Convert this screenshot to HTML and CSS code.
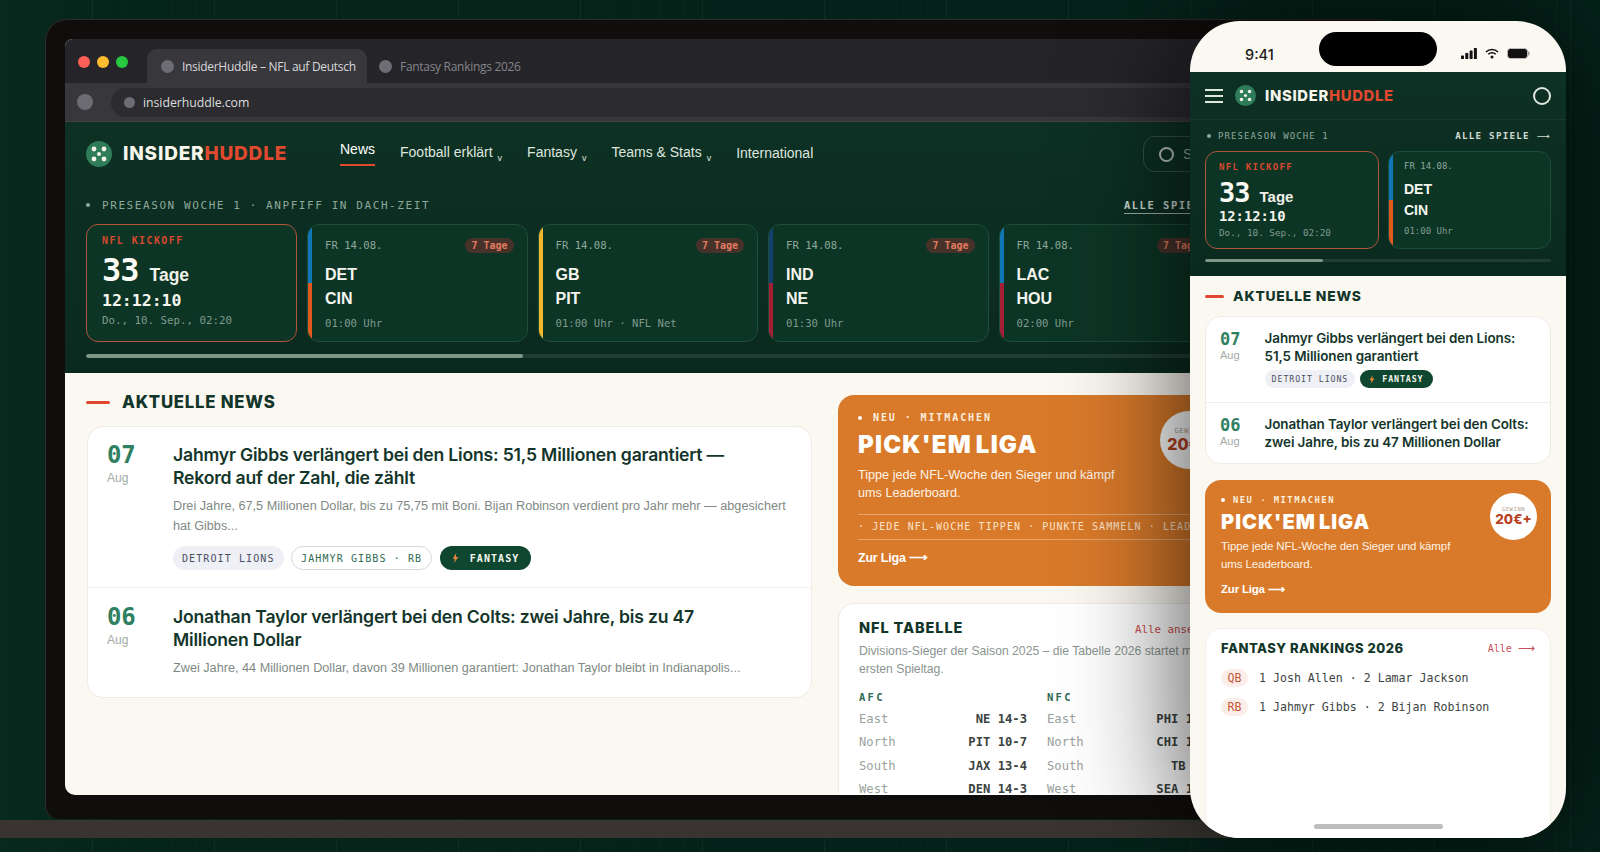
FILE: index.html
```html
<!DOCTYPE html>
<html lang="de">
<head>
<meta charset="utf-8">
<title>InsiderHuddle</title>
<link rel="stylesheet" href="styles.css">
</head>
<body>
<div class="base"></div>
<section class="laptop">
  <div class="screen">
    <div class="tabs">
      <div class="lights"><i class="red"></i><i class="yellow"></i><i class="green"></i></div>
      <div class="tab active"><i></i>InsiderHuddle – NFL auf Deutsch</div>
      <div class="tab"><i></i>Fantasy Rankings 2026</div>
    </div>
    <div class="addr">
      <i class="back"></i>
      <div class="url"><i></i>insiderhuddle.com</div>
    </div>
    <header class="hero">
      <nav class="nav">
        <div class="brand">
          <svg class="mark" viewBox="0 0 26 26"><circle cx="13" cy="13" r="13" fill="#2f7d58"/><g fill="#f5f3ea"><circle cx="8" cy="8" r="2.4"/><circle cx="18" cy="8" r="2.4"/><circle cx="13" cy="13" r="2"/><circle cx="8" cy="18" r="2.4"/><circle cx="18" cy="18" r="2.4"/></g></svg>
          <span class="word">INSIDER<b>HUDDLE</b></span>
        </div>
        <ul class="menu">
          <li class="on">News</li>
          <li>Football erklärt<small>v</small></li>
          <li>Fantasy<small>v</small></li>
          <li>Teams &amp; Stats<small>v</small></li>
          <li>International</li>
        </ul>
        <div class="search"><i></i>Suchen</div>
      </nav>
      <div class="tick-head">
        <span class="tick-label"><i></i>PRESEASON WOCHE 1 · ANPFIFF IN DACH-ZEIT</span>
        <span class="tick-all">ALLE SPIELE</span>
      </div>
      <div class="games">
        <article class="kick">
          <div class="kick-tag">NFL KICKOFF</div>
          <div class="kick-big"><strong>33</strong><span>Tage</span></div>
          <div class="kick-clock">12:12:10</div>
          <div class="kick-date">Do., 10. Sep., 02:20</div>
        </article>
        <article class="game">
          <div class="stripe"><i class="c-det"></i><i class="c-cin"></i></div>
          <div class="game-in">
            <div class="game-top"><span>FR 14.08.</span><em>7 Tage</em></div>
            <div class="team first">DET</div><div class="team">CIN</div>
            <div class="game-time">01:00 Uhr</div>
          </div>
        </article>
        <article class="game">
          <div class="stripe"><i class="c-gb"></i><i class="c-gb"></i></div>
          <div class="game-in">
            <div class="game-top"><span>FR 14.08.</span><em>7 Tage</em></div>
            <div class="team first">GB</div><div class="team">PIT</div>
            <div class="game-time">01:00 Uhr · NFL Net</div>
          </div>
        </article>
        <article class="game">
          <div class="stripe"><i class="c-ind"></i><i class="c-ne"></i></div>
          <div class="game-in">
            <div class="game-top"><span>FR 14.08.</span><em>7 Tage</em></div>
            <div class="team first">IND</div><div class="team">NE</div>
            <div class="game-time">01:30 Uhr</div>
          </div>
        </article>
        <article class="game">
          <div class="stripe"><i class="c-det"></i><i class="c-ne"></i></div>
          <div class="game-in">
            <div class="game-top"><span>FR 14.08.</span><em>7 Tage</em></div>
            <div class="team first">LAC</div><div class="team">HOU</div>
            <div class="game-time">02:00 Uhr</div>
          </div>
        </article>
      </div>
      <div class="scroll"><i></i></div>
    </header>
    <main class="content">
      <div class="news-col">
        <h2 class="sec"><i></i>AKTUELLE NEWS</h2>
        <div class="news">
          <article class="item">
            <div class="date"><b>07</b><span>Aug</span></div>
            <div class="body">
              <h3>Jahmyr Gibbs verlängert bei den Lions: 51,5 Millionen garantiert — Rekord auf der Zahl, die zählt</h3>
              <p>Drei Jahre, 67,5 Millionen Dollar, bis zu 75,75 mit Boni. Bijan Robinson verdient pro Jahr mehr — abgesichert hat Gibbs...</p>
              <div class="tags">
                <span class="tag grey">DETROIT LIONS</span>
                <span class="tag line">JAHMYR GIBBS · RB</span>
                <span class="tag dark"><svg viewBox="0 0 10 14"><path d="M6 0 1 8h3l-1 6 6-8.500H5.500z" fill="#e8873a"/></svg>FANTASY</span>
              </div>
            </div>
          </article>
          <article class="item">
            <div class="date"><b>06</b><span>Aug</span></div>
            <div class="body">
              <h3>Jonathan Taylor verlängert bei den Colts: zwei Jahre, bis zu 47 Millionen Dollar</h3>
              <p>Zwei Jahre, 44 Millionen Dollar, davon 39 Millionen garantiert: Jonathan Taylor bleibt in Indianapolis...</p>
            </div>
          </article>
        </div>
      </div>
      <aside class="side">
        <section class="pick">
          <div class="pick-tag"><i></i>NEU · MITMACHEN</div>
          <h2>PICK'EM LIGA</h2>
          <p>Tippe jede NFL-Woche den Sieger und kämpf<br>ums Leaderboard.</p>
          <div class="pick-strip">· JEDE NFL-WOCHE TIPPEN · PUNKTE SAMMELN · LEADERBOARD</div>
          <div class="pick-link">Zur Liga ⟶</div>
          <div class="prize"><small>GEWINN</small><b>20€+</b></div>
        </section>
        <section class="table">
          <div class="table-head"><h2>NFL TABELLE</h2><span>Alle ansehen</span></div>
          <p>Divisions-Sieger der Saison 2025 – die Tabelle 2026 startet mit dem ersten Spieltag.</p>
          <div class="confs">
            <div class="conf">
              <h4>AFC</h4>
              <div class="row"><span>East</span><b>NE 14-3</b></div>
              <div class="row"><span>North</span><b>PIT 10-7</b></div>
              <div class="row"><span>South</span><b>JAX 13-4</b></div>
              <div class="row"><span>West</span><b>DEN 14-3</b></div>
            </div>
            <div class="conf">
              <h4>NFC</h4>
              <div class="row"><span>East</span><b>PHI 11-6</b></div>
              <div class="row"><span>North</span><b>CHI 11-6</b></div>
              <div class="row"><span>South</span><b>TB 8-9</b></div>
              <div class="row"><span>West</span><b>SEA 14-3</b></div>
            </div>
          </div>
        </section>
      </aside>
    </main>
  </div>
</section>

<section class="phone">
  <div class="status">
    <span class="time">9:41</span>
    <div class="island"></div>
    <div class="sicons">
      <svg class="sig" viewBox="0 0 16 11"><rect x="0" y="7.500" width="3" height="3.500" rx=".6"/><rect x="4.300" y="5" width="3" height="6" rx=".6"/><rect x="8.600" y="2.500" width="3" height="8.500" rx=".6"/><rect x="12.900" y="0" width="3" height="11" rx=".6"/></svg>
      <svg class="wifi" viewBox="0 0 14 11"><path d="M1 4a8.500 8.500 0 0 1 12 0M3.200 6.300a5.400 5.400 0 0 1 7.600 0" fill="none" stroke="#111" stroke-width="1.500"/><circle cx="7" cy="9" r="1.500" fill="#111"/></svg>
      <svg class="batt" viewBox="0 0 23 11"><rect x=".5" y=".5" width="20" height="10" rx="3" fill="#111" stroke="#bbb"/><rect x="21" y="3.500" width="1.500" height="4" rx=".7" fill="#999"/></svg>
    </div>
  </div>
  <div class="hero">
    <nav class="pnav">
      <div class="burger"><i></i><i></i><i></i></div>
      <svg class="mark" viewBox="0 0 26 26"><circle cx="13" cy="13" r="13" fill="#2f7d58"/><g fill="#f5f3ea"><circle cx="8" cy="8" r="2.200"/><circle cx="18" cy="8" r="2.200"/><circle cx="13" cy="13" r="2"/><circle cx="8" cy="18" r="2.200"/><circle cx="18" cy="18" r="2.200"/></g></svg>
      <span class="word">INSIDER<b>HUDDLE</b></span>
      <i class="ring"></i>
    </nav>
    <div class="tick-head">
      <span class="tick-label"><i></i>PRESEASON WOCHE 1</span>
      <span class="tick-all">ALLE SPIELE <span class="arr">⟶</span></span>
    </div>
    <div class="games">
      <article class="kick">
        <div class="kick-tag">NFL KICKOFF</div>
        <div class="kick-big"><strong>33</strong><span>Tage</span></div>
        <div class="kick-clock">12:12:10</div>
        <div class="kick-date">Do., 10. Sep., 02:20</div>
      </article>
      <article class="game">
        <div class="stripe"><i class="c-det"></i><i class="c-cin"></i></div>
        <div class="game-in">
          <div class="game-top"><span>FR 14.08.</span></div>
          <div class="team first">DET</div><div class="team">CIN</div>
          <div class="game-time">01:00 Uhr</div>
        </div>
      </article>
    </div>
    <div class="scroll"><i></i></div>
  </div>
  <div class="pbody">
    <h2 class="sec"><i></i>AKTUELLE NEWS</h2>
    <div class="news">
      <article class="item">
        <div class="date"><b>07</b><span>Aug</span></div>
        <div class="body">
          <h3>Jahmyr Gibbs verlängert bei den Lions: 51,5 Millionen garantiert</h3>
          <div class="tags">
            <span class="tag grey">DETROIT LIONS</span>
            <span class="tag dark"><svg viewBox="0 0 10 14"><path d="M6 0 1 8h3l-1 6 6-8.500H5.500z" fill="#e8873a"/></svg>FANTASY</span>
          </div>
        </div>
      </article>
      <article class="item">
        <div class="date"><b>06</b><span>Aug</span></div>
        <div class="body">
          <h3>Jonathan Taylor verlängert bei den Colts: zwei Jahre, bis zu 47 Millionen Dollar</h3>
        </div>
      </article>
    </div>
    <section class="pick">
      <div class="pick-tag"><i></i>NEU · MITMACHEN</div>
      <h2>PICK'EM LIGA</h2>
      <p>Tippe jede NFL-Woche den Sieger und kämpf<br>ums Leaderboard.</p>
      <div class="pick-link">Zur Liga ⟶</div>
      <div class="prize"><small>GEWINN</small><b>20€+</b></div>
    </section>
    <section class="rank">
      <div class="rank-head"><h2>FANTASY RANKINGS 2026</h2><span>Alle <span class="arr">⟶</span></span></div>
      <div class="rank-row"><em>QB</em><span>1 Josh Allen · 2 Lamar Jackson</span></div>
      <div class="rank-row"><em>RB</em><span>1 Jahmyr Gibbs · 2 Bijan Robinson</span></div>
    </section>
  </div>
  <div class="home"></div>
</section>
</body>
</html>
```

FILE: styles.css
```css
* { box-sizing: border-box; margin: 0; padding: 0; }
html, body { width: 1600px; height: 852px; overflow: hidden; }
body {
  position: relative;
  font-family: "Liberation Sans", Arial, sans-serif;
  background:
    repeating-linear-gradient(90deg, rgba(255,255,255,.045) 0 1px, transparent 1px 122px) -30px 0,
    repeating-linear-gradient(90deg, rgba(255,255,255,.012) 0 1px, transparent 1px 24.400px),
    linear-gradient(90deg, #08291e 0, #06251a 8%, #05221a 50%, #04231a 100%);
}
ul { list-style: none; }
i, em { font-style: normal; }
i { display: block; }
.tick-all .arr { font: 400 1em/1 "DejaVu Sans", sans-serif; }
.rank-head .arr { font: 400 12px/1 "DejaVu Sans", sans-serif; }

.base { position: absolute; left: 0; top: 820px; width: 1400px; height: 18px; background: #393431; }

.laptop {
  position: absolute; left: 45px; top: 19px; width: 1355px; height: 800px;
  padding: 19px 20px 24px 19px;
  background: #100e0c;
  border: 1px solid #2f2b28; border-bottom: 0;
  border-radius: 22px 22px 14px 14px;
}
.screen {
  width: 100%; height: 756px;
  background: #fbf8f1;
  border-radius: 8px 8px 10px 10px;
  overflow: hidden;
}

/* browser chrome */
.tabs { height: 44px; background: #242429; display: flex; align-items: flex-end; padding-left: 13px; }
.lights { display: flex; gap: 7px; align-self: flex-start; margin-top: 17px; width: 69px; flex: none; }
.lights i { width: 12px; height: 12px; border-radius: 50%; }
.lights .red { background: #ff5f57; }
.lights .yellow { background: #febc2e; }
.lights .green { background: #28c840; }
.tab {
  height: 34px; width: 206px; padding-left: 12px; display: flex; align-items: center; gap: 8px; flex: none;
  font: 12px "Open Sans", sans-serif; color: #85858b; letter-spacing: -.3px; white-space: nowrap;
}
.tab i { width: 13px; height: 13px; border-radius: 50%; background: #6d6d73; flex: none; }
.tab.active { background: #37373c; color: #d9d9da; border-radius: 10px 10px 0 0; width: 220px; padding-left: 14px; }
.addr { height: 39px; background: #37373c; border-bottom: 1px solid #443f44; display: flex; align-items: center; padding-left: 12px; }
.addr .back { width: 16px; height: 16px; border-radius: 50%; background: #6c6c72; flex: none; }
.url {
  margin-left: 18px; flex: 1; height: 29px; border-radius: 15px 0 0 15px; background: #2b2b30;
  display: flex; align-items: center; gap: 8px; padding-left: 13px;
  font: 12.300px "Open Sans", sans-serif; color: #dcdcdc; letter-spacing: -.05px;
}
.url i { width: 11px; height: 11px; border-radius: 50%; background: #6c6c72; }

/* green hero, shared by both mockups */
.hero { background: linear-gradient(180deg, #0d3124, #0b2a1f); color: #fff; }
.screen .hero { height: 251px; padding: 0 21px; }
.nav { height: 64px; display: flex; align-items: center; }
.brand { display: flex; align-items: center; gap: 11px; width: 254px; flex: none; }
.mark { width: 26px; height: 26px; flex: none; display: block; }
.word { font: 800 19px Inter, sans-serif; letter-spacing: .8px; color: #f7f5ec; white-space: nowrap; position: relative; top: -1px; }
.word b { color: #e0492f; font-weight: 800; }
.menu { display: flex; align-items: center; gap: 25px; font-size: 14px; color: #dfe5df; white-space: nowrap; margin-top: -2px; }
.menu li { position: relative; line-height: 20px; }
.menu small { font-size: 9px; margin-left: 5px; position: relative; top: 4px; }
.menu .on { color: #fff; padding-bottom: 8px; }
.menu .on::after { content: ""; position: absolute; left: 0; right: 0; top: 25px; height: 2px; background: #e0492f; }
.search {
  margin-left: auto; display: flex; align-items: center; gap: 9px; width: 215px; height: 36px;
  border: 1px solid rgba(255,255,255,.16); border-radius: 12px; padding-left: 15px;
  color: #9db0a5; font-size: 14px;
}
.search i { width: 15px; height: 15px; border: 2px solid #b9c5bd; border-radius: 50%; }

.tick-head { display: flex; justify-content: space-between; align-items: center; }
.screen .tick-head { height: 38px; }
.tick-label {
  display: flex; align-items: center; gap: 12px;
  font: 11px "DejaVu Sans Mono", monospace; letter-spacing: 1.580px; color: #8fa89b; white-space: nowrap;
}
.tick-label i { width: 4px; height: 4px; border-radius: 50%; background: #8fa89b; }
.tick-all {
  font: 700 10.500px "DejaVu Sans Mono", monospace; letter-spacing: 1.500px; color: #cfd9d2; white-space: nowrap;
}
.screen .tick-all { border-bottom: 1px solid #9db0a5; padding-bottom: 2px; margin-right: 148px; margin-top: 2px; }

.games { display: flex; gap: 10px; overflow: hidden; }
.screen .games { height: 118px; }
.kick, .game { border-radius: 12px; background: #0d3526; flex: none; height: 100%; }
.kick { width: 211px; border: 1px solid #b2553c; padding: 9px 15px 0; }
.kick-tag { font: 700 10px/14px "DejaVu Sans Mono", monospace; letter-spacing: 1.400px; color: #d9482f; }
.kick-big { display: flex; align-items: baseline; gap: 11px; margin-top: 4px; height: 36px; line-height: 36px; }
.kick-big strong { font: 600 32px/36px "DejaVu Sans Mono", monospace; color: #fbfbf5; letter-spacing: -1px; }
.kick-big span { font-size: 17.500px; font-weight: 700; color: #f0f0e8; }
.kick-clock { font: 700 16.500px/20px "DejaVu Sans Mono", monospace; color: #f5f5ee; margin-top: 3px; }
.kick-date { font: 10.800px/14px "DejaVu Sans Mono", monospace; color: #7f9a8d; margin-top: 3px; }

.game { width: 220.500px; display: flex; border: 1px solid #1d4d3b; overflow: hidden; }
.stripe { width: 5px; flex: none; display: flex; flex-direction: column; margin: -1px 0 -1px -1px; }
.stripe i { flex: 1; }
.c-det { background: #0f77b5; }
.c-cin { background: #e2591d; }
.c-gb { background: #f0b72a; }
.c-ind { background: #12406f; }
.c-ne { background: #a51f34; }
.game-in { flex: 1; padding: 12px 13px 0 13px; min-width: 0; }
.game-top { height: 16px; display: flex; justify-content: space-between; align-items: center; }
.game-top span { font: 10.600px "DejaVu Sans Mono", monospace; color: #8fa89b; }
.game-top em {
  height: 15px; line-height: 15px; border-radius: 8px; background: #47322a; padding: 0 6px;
  font: 700 10px/15px "DejaVu Sans Mono", monospace; color: #e27b5f;
}
.team { font-size: 16px; font-weight: 700; line-height: 24px; color: #f5f5ef; }
.team.first { margin-top: 10px; }
.game-time { font: 10.600px/16px "DejaVu Sans Mono", monospace; color: #7f9a8d; margin-top: 4px; white-space: nowrap; }

.scroll { height: 4px; border-radius: 2px; background: rgba(255,255,255,.09); margin-top: 12px; overflow: hidden; }
.scroll i { height: 100%; width: 437px; background: #7c9688; border-radius: 2px; }

/* desktop content */
.content { display: grid; grid-template-columns: 725px 400px; gap: 26px; padding: 0 0 0 22px; }
.sec { display: flex; align-items: center; gap: 12px; font: 800 16.800px Inter, sans-serif; color: #12352a; letter-spacing: .75px; white-space: nowrap; }
.sec i { width: 24px; height: 3px; background: #e0492f; border-radius: 2px; flex: none; }
.news-col .sec { height: 20px; margin-top: 19px; margin-bottom: 14px; margin-left: -1px; }
.news { background: #fff; border: 1px solid #efece5; border-radius: 16px; }
.item { display: flex; padding: 16px 19px 17px; }
.item + .item { border-top: 1px solid #f1efe9; padding-top: 17px; padding-bottom: 18px; }
.date { width: 66px; flex: none; }
.date b { display: block; font: 700 24px/24px "DejaVu Sans Mono", monospace; color: #2f8060; letter-spacing: -.1px; }
.date span { display: block; font-size: 12px; line-height: 14px; color: #a2aaa6; margin-top: 4px; }
.body { min-width: 0; flex: 1; }
.item h3 { font: 600 17.600px/23px Inter, sans-serif; color: #14352a; letter-spacing: -.2px; max-width: 580px; }
.item p { font-size: 12.680px; line-height: 19.500px; color: #7f8a85; margin-top: 8px; }
.tags { display: flex; gap: 7.500px; margin-top: 10px; }
.tag {
  height: 24px; border-radius: 12px; padding: 0 9px; display: flex; align-items: center; white-space: nowrap;
  font: 10px "DejaVu Sans Mono", monospace; letter-spacing: 1.100px;
}
.tag.grey { background: #eef0f5; color: #4a4f63; }
.tag.line { border: 1px solid #d3dbd7; color: #2f6b52; }
.tag.dark { background: #0f4630; color: #f6f6ef; font-weight: 700; gap: 11px; padding: 0 12px; }
.tag svg { width: 7px; height: 10px; flex: none; }

.side { margin-top: 22px; display: flex; flex-direction: column; gap: 17px; }
.pick { position: relative; background: #d97a2a; color: #fff; border-radius: 16px; }
.side .pick { height: 191px; padding: 16px 0 0 20px; overflow: hidden; }
.pick-tag { display: flex; align-items: center; gap: 11px; font: 700 10px/14px "DejaVu Sans Mono", monospace; letter-spacing: 1.900px; color: #fdeedd; }
.pick-tag i { width: 4px; height: 4px; border-radius: 50%; background: #fff; }
.pick h2 { font: 900 24px/30px Inter, sans-serif; margin-top: 5px; letter-spacing: 1.200px; word-spacing: -2px; white-space: nowrap; }
.pick p { font-size: 12.650px; line-height: 18px; margin-top: 6px; color: #fdf3e7; }
.pick-strip {
  height: 26px; margin-top: 12px; border-top: 1px solid rgba(255,255,255,.32); border-bottom: 1px solid rgba(255,255,255,.32);
  font: 10px/23px "DejaVu Sans Mono", monospace; letter-spacing: 1.070px; color: #fbe3cb; white-space: nowrap; overflow: hidden;
}
.pick-link { font-size: 12.500px; font-weight: 700; line-height: 18px; margin-top: 9px; letter-spacing: -.2px; }
.prize {
  position: absolute; right: 20px; top: 16px; width: 58px; height: 58px; border-radius: 50%; background: #fff;
  display: flex; flex-direction: column; align-items: center; justify-content: center; color: #b8421f;
}
.prize small { font: 7px "DejaVu Sans Mono", monospace; letter-spacing: .6px; color: #b59d8d; }
.prize b { font: 800 16px/18px Inter, sans-serif; }

.table { background: #fff; border: 1px solid #efece5; border-radius: 16px; padding: 14px 19px 0 20px; height: 260px; }
.table-head { display: flex; justify-content: space-between; align-items: center; height: 18px; }
.table-head h2 { font: 800 14.500px Inter, sans-serif; color: #12352a; letter-spacing: .9px; }
.table-head span { font: 10.800px "DejaVu Sans Mono", monospace; color: #cc4b4b; margin-right: 5px; position: relative; top: 2px; }
.table > p { font-size: 12.200px; line-height: 17.500px; color: #8a9590; margin-top: 7px; margin-right: -20px; }
.confs { display: grid; grid-template-columns: 168px 168px; gap: 20px; margin-top: 11px; }
.conf h4 { font: 700 10.500px/16px "DejaVu Sans Mono", monospace; letter-spacing: 2.300px; color: #2f6b52; margin-bottom: 3px; }
.row { display: flex; justify-content: space-between; font: 12.200px/23.300px "DejaVu Sans Mono", monospace; white-space: nowrap; }
.row span { color: #9aa39e; }
.row b { font-weight: 700; color: #3a4340; }

/* phone */
.phone {
  position: absolute; left: 1190px; top: 21px; width: 376px; height: 817px;
  border-radius: 50px; background: #fbf8f1; overflow: hidden;
  box-shadow: 0 0 120px rgba(0,0,0,.75);
}
.status { height: 51px; display: flex; align-items: center; padding-top: 16px; position: relative; }
.time { font: 500 14.500px Inter, sans-serif; color: #1a1a1a; margin-left: 55px; }
.island { position: absolute; left: 129px; top: 11px; width: 118px; height: 34px; border-radius: 17px; background: #000; }
.sicons { position: absolute; left: 271px; top: 27px; display: flex; align-items: center; gap: 8px; }
.sig { width: 16px; height: 11px; fill: #111; }
.wifi { width: 14px; height: 11px; }
.batt { width: 23px; height: 11px; }
.phone .hero { height: 204px; padding: 0 15px; }
.pnav { height: 48px; margin: 0 -15px; padding: 0 15px; display: flex; align-items: center; border-bottom: 1px solid rgba(255,255,255,.05); }
.burger { width: 18px; display: flex; flex-direction: column; gap: 4px; margin-right: 12px; }
.burger i { height: 2px; background: #dfe7e0; }
.pnav .mark { width: 21px; height: 21px; margin-right: 9px; }
.pnav .word { font-size: 14.800px; letter-spacing: .7px; top: 0; }
.ring { width: 18px; height: 18px; border: 2px solid #dfe7e0; border-radius: 50%; margin-left: auto; }
.phone .tick-head { height: 31px; }
.phone .tick-label { font-size: 9px; letter-spacing: 1.100px; gap: 7px; padding-left: 2px; }
.phone .tick-all { font-size: 9.200px; letter-spacing: 1.250px; }
.phone .games { height: 98px; gap: 9px; }
.phone .kick { width: 174px; padding: 9px 13px 0; }
.phone .kick-tag { font-size: 9px; line-height: 13px; letter-spacing: 1.300px; }
.phone .kick-big { height: 30px; margin-top: 4px; gap: 10px; line-height: 30px; }
.phone .kick-big strong { font-size: 27px; line-height: 30px; }
.phone .kick-big span { font-size: 15px; }
.phone .kick-clock { font-size: 13.800px; line-height: 17px; margin-top: 0; }
.phone .kick-date { font-size: 9.300px; line-height: 12px; margin-top: 2px; }
.phone .game { width: 163px; }
.phone .game-in { padding: 6px 12px 0 11px; }
.phone .game-top span { font-size: 9px; }
.phone .team { font-size: 14px; line-height: 21px; }
.phone .team.first { margin-top: 5px; }
.phone .game-time { font-size: 9px; line-height: 12px; margin-top: 4px; }
.phone .scroll { margin-top: 10px; height: 3px; }
.phone .scroll i { width: 118px; }
.pbody { padding: 10px 15px 0; }
.pbody .sec { font-size: 13.800px; height: 20px; gap: 9px; margin-bottom: 10px; letter-spacing: .8px; }
.pbody .sec i { width: 19px; }
.pbody .item { padding: 12px 14px 14px; }
.pbody .item + .item { padding-top: 12px; padding-bottom: 12px; }
.pbody .date { width: 44.600px; }
.pbody .date b { font-size: 17px; line-height: 20px; }
.pbody .date span { font-size: 11px; line-height: 12px; margin-top: 0; }
.pbody .item h3 { font-size: 13.450px; line-height: 18px; letter-spacing: -.1px; max-width: none; }
.pbody .tags { margin-top: 5px; gap: 5px; }
.pbody .tag { height: 18px; font-size: 8.300px; letter-spacing: .9px; padding: 0 7px; }
.pbody .tag.dark { gap: 7px; padding: 0 9px; }
.pbody .tag svg { width: 6px; height: 9px; }
.pbody .pick { margin-top: 16px; height: 133px; padding: 13px 0 0 16px; }
.pbody .pick-tag { font-size: 8.800px; letter-spacing: 1.500px; gap: 8px; }
.pbody .pick h2 { font-size: 20px; line-height: 26px; margin-top: 2px; letter-spacing: 1px; }
.pbody .pick p { font-size: 11.500px; line-height: 17.500px; margin-top: 3px; letter-spacing: -.1px; }
.pbody .pick-link { font-size: 11.500px; line-height: 16px; margin-top: 8px; }
.pbody .prize { right: 14px; top: 13px; width: 47px; height: 47px; }
.pbody .prize small { font-size: 5.500px; }
.pbody .prize b { font-size: 13.500px; line-height: 15px; }
.rank { margin-top: 15px; height: 300px; background: #fff; border: 1px solid #f3f0ea; border-radius: 16px; padding: 10px 15px 0; }
.rank-head { display: flex; justify-content: space-between; align-items: center; height: 18px; margin-bottom: 12px; }
.rank-head h2 { font: 800 13px Inter, sans-serif; color: #12352a; letter-spacing: .5px; }
.rank-head > span { font: 10px "DejaVu Sans Mono", monospace; color: #c9505a; }
.rank-row { display: flex; align-items: center; gap: 11px; height: 18px; margin-bottom: 11px; font: 11.600px "DejaVu Sans Mono", monospace; color: #3c4441; white-space: nowrap; }
.rank-row em { width: 27px; height: 18px; border-radius: 9px; background: #fbeee9; color: #c4583a; text-align: center; line-height: 18px; }
.home { position: absolute; left: 124px; bottom: 9px; width: 129px; height: 5px; border-radius: 3px; background: #bdbdbd; }
```
